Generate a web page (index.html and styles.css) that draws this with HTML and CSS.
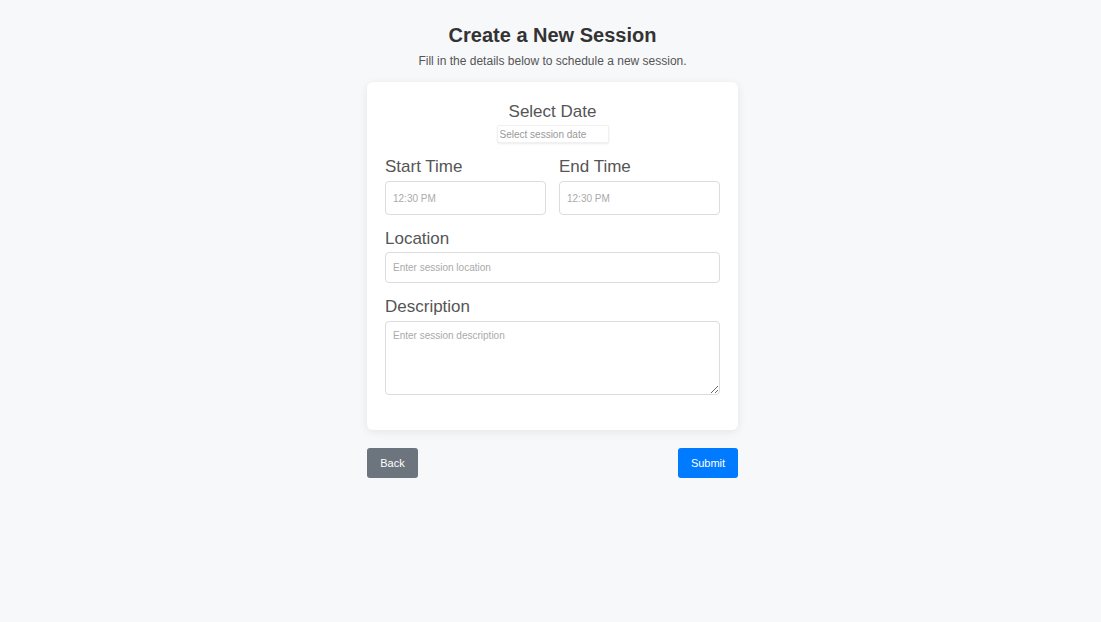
FILE: index.html
```html
<!DOCTYPE html>
<html>
<head>
<meta charset="utf-8">
<link rel="stylesheet" href="styles.css">
</head>
<body>
<main class="page">
  <h1 class="title">Create a New Session</h1>
  <p class="subtitle">Fill in the details below to schedule a new session.</p>
  <form class="card">
    <div class="date-group">
      <label class="label">Select Date</label>
      <input class="date-input" type="text" placeholder="Select session date">
    </div>
    <div class="row">
      <div class="field field-time">
        <label class="label">Start Time</label>
        <input class="input time" type="text" placeholder="12:30 PM">
      </div>
      <div class="field field-time">
        <label class="label">End Time</label>
        <input class="input time" type="text" placeholder="12:30 PM">
      </div>
    </div>
    <div class="field">
      <label class="label">Location</label>
      <input class="input" type="text" placeholder="Enter session location">
    </div>
    <div class="field field-desc">
      <label class="label">Description</label>
      <textarea class="input textarea" placeholder="Enter session description"></textarea>
    </div>
  </form>
  <div class="actions">
    <button class="btn btn-back" type="button">Back</button>
    <button class="btn btn-submit" type="button">Submit</button>
  </div>
</main>
</body>
</html>
```

FILE: styles.css
```css
* { box-sizing: border-box; }
html, body { margin: 0; padding: 0; }
body {
  background: #f7f8fa;
  font-family: "Liberation Sans", Arial, sans-serif;
  color: #555;
  min-height: 622px;
  padding-left: 4px;
}
.page {
  width: 371px;
  margin: 0 auto;
  padding-top: 23px;
}
.title {
  margin: 0;
  font-size: 20px;
  line-height: 24px;
  font-weight: 700;
  color: #333;
  text-align: center;
}
.subtitle {
  margin: 6px 0 0;
  font-size: 12px;
  line-height: 16px;
  color: #555;
  text-align: center;
}
.card {
  margin-top: 13px;
  background: #fff;
  border-radius: 6px;
  box-shadow: 0 2px 10px rgba(0,0,0,0.08);
  padding: 18px 18px 35px;
  display: flex;
  flex-direction: column;
  gap: 12px;
}
.date-group {
  display: flex;
  flex-direction: column;
  align-items: center;
  gap: 5px;
}
.label {
  font-size: 17px;
  line-height: 17px;
  padding-top: 3px;
  color: #555;
}
.date-input {
  width: 112px;
  height: 18px;
  border: 1px solid #f0f0f0;
  border-radius: 2px;
  box-shadow: 0 1px 2px rgba(0,0,0,0.08);
  padding: 0 2px;
  font-family: "Liberation Sans", Arial, sans-serif;
  font-size: 10px;
  color: #555;
  outline: none;
}
.date-input::placeholder { color: #999; }
.row {
  display: grid;
  grid-template-columns: 1fr 1fr;
  gap: 13px;
}
.field {
  display: flex;
  flex-direction: column;
  gap: 5px;
}
.field-time, .field-desc { gap: 6px; }
.input {
  width: 100%;
  height: 31px;
  border: 1px solid #dcdcdc;
  border-radius: 4px;
  padding: 0 7px;
  font-family: "Liberation Sans", Arial, sans-serif;
  font-size: 10px;
  color: #555;
  background: #fff;
  outline: none;
}
.input.time { height: 34px; }
.input::placeholder { color: #aaa; }
.textarea {
  height: 74px;
  padding: 8px 7px;
  resize: vertical;
  display: block;
}
.actions {
  margin-top: 18px;
  display: flex;
  justify-content: space-between;
}
.btn {
  height: 30px;
  border: none;
  border-radius: 3px;
  color: #fff;
  font-family: "Liberation Sans", Arial, sans-serif;
  font-size: 11px;
  padding: 0;
  cursor: pointer;
}
.btn-back { background: #6c757d; width: 51px; }
.btn-submit { background: #007bff; width: 60px; }
```
